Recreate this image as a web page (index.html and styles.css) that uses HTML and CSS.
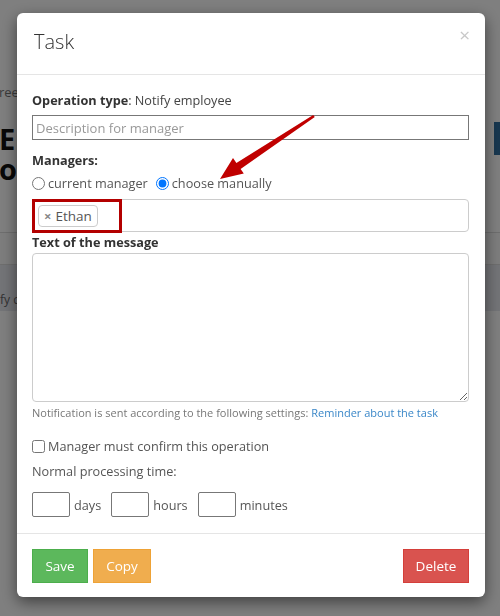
FILE: index.html
```html
<!DOCTYPE html>
<html>
<head>
<meta charset="utf-8">
<link rel="stylesheet" href="styles.css">
</head>
<body>
<div class="page">
  <div class="page-left">
    <div class="crumbs">ree</div>
    <h1 class="page-title">Er<br>oc</h1>
  </div>
  <div class="page-right">
    <span class="btn-blue"></span>
  </div>
</div>
<div class="page-rule"></div>
<div class="panel"><span class="panel-text">fy c</span></div>
<div class="backdrop"></div>
<div class="modal">
  <div class="modal-header">
    <h4 class="modal-title">Task</h4>
    <span class="close">×</span>
  </div>
  <div class="modal-body">
    <p class="op"><b>Operation type</b>: Notify employee</p>
    <input class="desc" type="text" placeholder="Description for manager">
    <div class="label lbl-managers">Managers:</div>
    <div class="radios">
      <label class="radio"><input type="radio" name="m"> current manager</label>
      <label class="radio"><input type="radio" name="m" checked> choose manually</label>
    </div>
    <div class="select">
      <span class="tag"><span class="tag-x">×</span>Ethan</span>
      <span class="highlight"></span>
    </div>
    <div class="label lbl-text">Text of the message</div>
    <textarea class="msg"></textarea>
    <div class="help">Notification is sent according to the following settings: <a class="link" href="#">Reminder about the task</a></div>
    <label class="check"><input type="checkbox"> Manager must confirm this operation</label>
    <div class="normal">Normal processing time:</div>
    <div class="time">
      <input class="num" type="text"><span class="unit">days</span>
      <input class="num" type="text"><span class="unit">hours</span>
      <input class="num" type="text"><span class="unit">minutes</span>
    </div>
  </div>
  <div class="modal-footer">
    <button class="btn btn-save">Save</button>
    <button class="btn btn-copy">Copy</button>
    <span class="spacer"></span>
    <button class="btn btn-del">Delete</button>
  </div>
</div>
<svg class="arrow" viewBox="0 0 500 616" width="500" height="616">
  <polygon points="313.2,115.0 314.8,117.0 240.6,168.9 243.8,173.6 220,179 233.0,158.0 236.4,162.9" fill="#c00000"/>
</svg>
</body>
</html>
```

FILE: styles.css
```css
html, body {
  margin: 0;
  padding: 0;
  width: 500px;
  height: 616px;
  overflow: hidden;
  background: #fff;
  font-family: "Open Sans", "Liberation Sans", sans-serif;
  color: #333;
}
.page {
  display: flex;
  justify-content: space-between;
  align-items: flex-start;
  padding-top: 84px;
  height: 148px;
}
.page-left {
  width: 17px;
  overflow: hidden;
}
.crumbs {
  font-size: 13px;
  line-height: 16px;
  color: #777;
  margin-left: -1px;
}
.page-title {
  margin: 24px 0 0 -1px;
  font-size: 29px;
  line-height: 30px;
  font-weight: 700;
  color: #111;
  white-space: nowrap;
}
.page-right {
  padding-top: 38px;
}
.btn-blue {
  display: block;
  width: 6px;
  height: 33px;
  background: #2f6e9f;
}
.page-rule {
  border-top: 1px solid #dcdcdc;
  height: 31px;
  background: #fafafa;
}
.panel {
  height: 47px;
  background: #e6e8ee;
  border-top: 1px solid #ddd;
  box-sizing: border-box;
  padding-top: 28px;
  font-size: 12px;
  line-height: 14px;
  color: #666;
  overflow: hidden;
}
.panel-text {
  display: block;
  width: 17px;
  overflow: hidden;
  white-space: nowrap;
}
.backdrop {
  position: fixed;
  left: 0;
  top: 0;
  width: 500px;
  height: 616px;
  background: rgba(0,0,0,0.5);
}
.modal {
  position: fixed;
  left: 17px;
  top: 13px;
  width: 468px;
  height: 584px;
  background: #fff;
  border-radius: 6px;
  box-shadow: 0 5px 15px rgba(0,0,0,0.5);
  display: flex;
  flex-direction: column;
  box-sizing: border-box;
}
.modal-header {
  height: 62px;
  box-sizing: border-box;
  border-bottom: 1px solid #e5e5e5;
  padding: 13px 15px 0 17px;
  display: flex;
  justify-content: space-between;
  align-items: flex-start;
}
.modal-title {
  margin: 0;
  font-size: 20px;
  line-height: 32px;
  font-weight: 300;
  color: #333;
}
.close {
  font-size: 19px;
  line-height: 19px;
  color: #c8c8c8;
  margin-top: 0px;
  font-weight: 400;
}
.modal-body {
  padding: 16px 16px 0 15px;
  flex: 1;
  font-size: 12.7px;
}
.op {
  margin: 0;
  line-height: 18px;
  color: #444;
}
.op b { color: #333; }
.desc {
  display: block;
  box-sizing: border-box;
  width: 437px;
  height: 25px;
  margin: 6px 0 0 0;
  border: 1px solid #777;
  border-radius: 0;
  padding: 0 3px;
  font-family: inherit;
  font-size: 13px;
  color: #333;
  outline: none;
}
.desc::placeholder { color: #999; }
.label {
  font-weight: 700;
  line-height: 18px;
  color: #333;
}
.lbl-managers { margin-top: 11px; }
.radios {
  display: flex;
  gap: 8px;
  margin-top: 5px;
  line-height: 18px;
  color: #555;
}
.radio {
  display: flex;
  align-items: center;
  gap: 3px;
}
.radio input {
  margin: 0;
  width: 13px;
  height: 13px;
}
.select {
  position: relative;
  box-sizing: border-box;
  width: 437px;
  height: 33px;
  margin-top: 7px;
  border: 1px solid #ccc;
  border-radius: 4px;
  padding: 5px 0 0 5px;
}
.tag {
  display: inline-flex;
  align-items: center;
  box-sizing: border-box;
  height: 22px;
  padding: 0 5px 0 5px;
  border: 1px solid #ccc;
  border-radius: 4px;
  background: #fff;
  font-size: 13.5px;
  color: #555;
}
.tag-x {
  color: #888;
  font-weight: 700;
  font-size: 13px;
  margin-right: 4px;
}
.highlight {
  position: absolute;
  left: -1px;
  top: -1px;
  width: 90px;
  height: 34px;
  box-sizing: border-box;
  border: 3px solid #b30000;
}
.lbl-text { margin-top: 1px; }
.msg {
  display: block;
  box-sizing: border-box;
  width: 437px;
  height: 149px;
  margin-top: 2px;
  border: 1px solid #ccc;
  border-radius: 4px;
  resize: vertical;
  font-family: inherit;
  outline: none;
}
.help {
  margin-top: 3px;
  font-size: 11px;
  line-height: 16px;
  color: #777;
}
.link {
  color: #3a87c8;
  text-decoration: none;
}
.check {
  display: flex;
  align-items: center;
  gap: 3px;
  margin-top: 16px;
  line-height: 18px;
  color: #555;
}
.check input {
  margin: 0;
  width: 13px;
  height: 13px;
}
.normal {
  margin-top: 7px;
  line-height: 18px;
  color: #555;
}
.time {
  display: flex;
  align-items: center;
  margin-top: 12px;
  color: #555;
}
.num {
  box-sizing: border-box;
  width: 38px;
  height: 25px;
  margin: 0;
  border: 1px solid #777;
  border-radius: 2px;
  padding: 0 3px;
  outline: none;
}
.unit {
  margin: 0 10px 0 4px;
  line-height: 18px;
}
.modal-footer {
  border-top: 1px solid #e5e5e5;
  padding: 15px 16px 0 15px;
  height: 64px;
  box-sizing: border-box;
  display: flex;
  align-items: flex-start;
  gap: 5px;
}
.spacer { flex: 1; }
.btn {
  height: 34px;
  box-sizing: border-box;
  padding: 0 6px;
  border: 1px solid transparent;
  border-radius: 0;
  font-family: inherit;
  font-size: 13.5px;
  color: #fff;
  cursor: pointer;
}
.btn-save { background: #5cb85c; border-color: #4cae4c; width: 56px; }
.btn-copy { background: #f0ad4e; border-color: #eea236; width: 58px; }
.btn-del { background: #d9534f; border-color: #d43f3a; width: 66px; }
.arrow {
  position: fixed;
  left: 0;
  top: 0;
  pointer-events: none;
}
```
